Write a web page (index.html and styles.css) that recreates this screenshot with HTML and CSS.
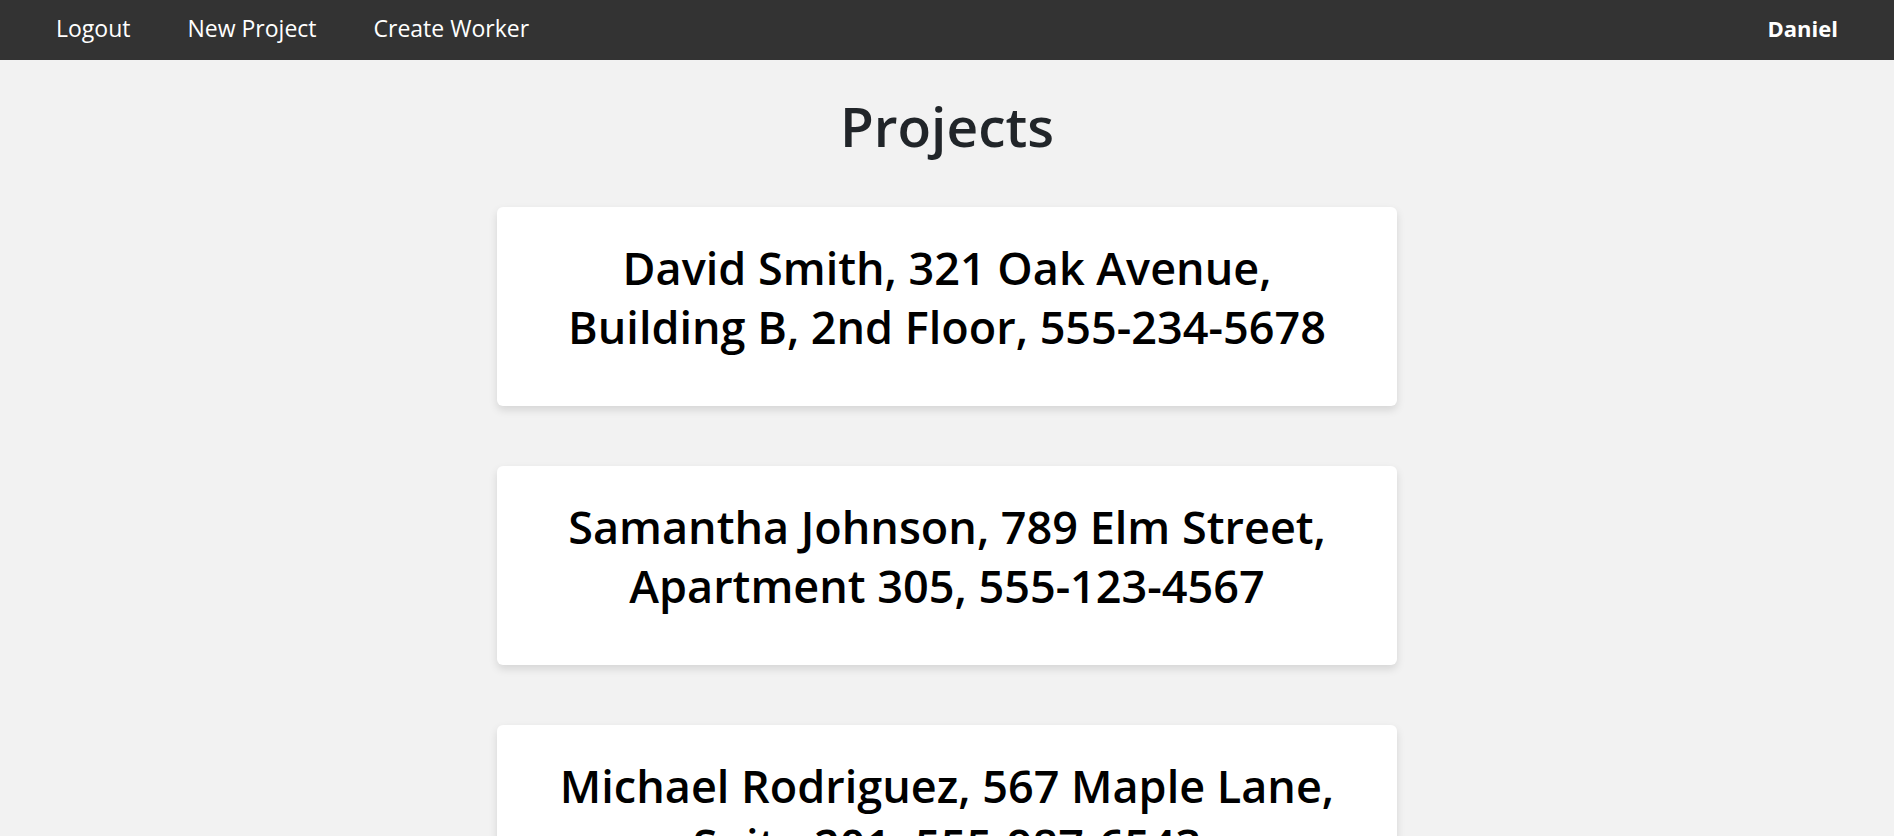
FILE: index.html
```html
<!DOCTYPE html>
<html lang="en">
<head>
<meta charset="utf-8">
<title>Projects</title>
<link rel="stylesheet" href="styles.css">
</head>
<body>
<nav class="topbar">
  <div class="nav-links">
    <a class="nav-link" href="#">Logout</a>
    <a class="nav-link" href="#">New Project</a>
    <a class="nav-link" href="#">Create Worker</a>
  </div>
  <div class="user">Daniel</div>
</nav>
<main class="content">
  <h1 class="title">Projects</h1>
  <div class="project-list">
    <div class="card"><h2 class="card-text">David Smith, 321 Oak Avenue, Building B, 2nd Floor, 555-234-5678</h2></div>
    <div class="card"><h2 class="card-text">Samantha Johnson, 789 Elm Street, Apartment 305, 555-123-4567</h2></div>
    <div class="card"><h2 class="card-text">Michael Rodriguez, 567 Maple Lane, Suite 201, 555-987-6543</h2></div>
  </div>
</main>
</body>
</html>
```
FILE: styles.css
```css
* { box-sizing: border-box; }
html, body {
  margin: 0;
  padding: 0;
  background: #f2f2f2;
  font-family: "Segoe UI", "Open Sans", "Noto Sans", sans-serif;
}
.topbar {
  height: 60px;
  background: #333333;
  display: flex;
  align-items: center;
  justify-content: space-between;
  padding: 0 56px 5px;
}
.nav-links {
  display: flex;
  gap: 57px;
}
.nav-link {
  color: #ffffff;
  text-decoration: none;
  font-size: 23px;
}
.user {
  color: #ffffff;
  font-weight: 700;
  font-size: 22px;
}
.content {
  display: flex;
  flex-direction: column;
  align-items: center;
}
.title {
  margin: 28px 0 44px;
  font-size: 55px;
  font-weight: 600;
  color: #212529;
}
.project-list {
  width: 900px;
  display: flex;
  flex-direction: column;
  gap: 60px;
}
.card {
  background: #ffffff;
  border-radius: 6px;
  box-shadow: 0 4px 8px rgba(0, 0, 0, 0.12);
  padding: 31px 40px 50px;
}
.card-text {
  margin: 0;
  text-align: center;
  font-size: 45px;
  font-weight: 600;
  color: #000000;
  line-height: 59px;
}
```
